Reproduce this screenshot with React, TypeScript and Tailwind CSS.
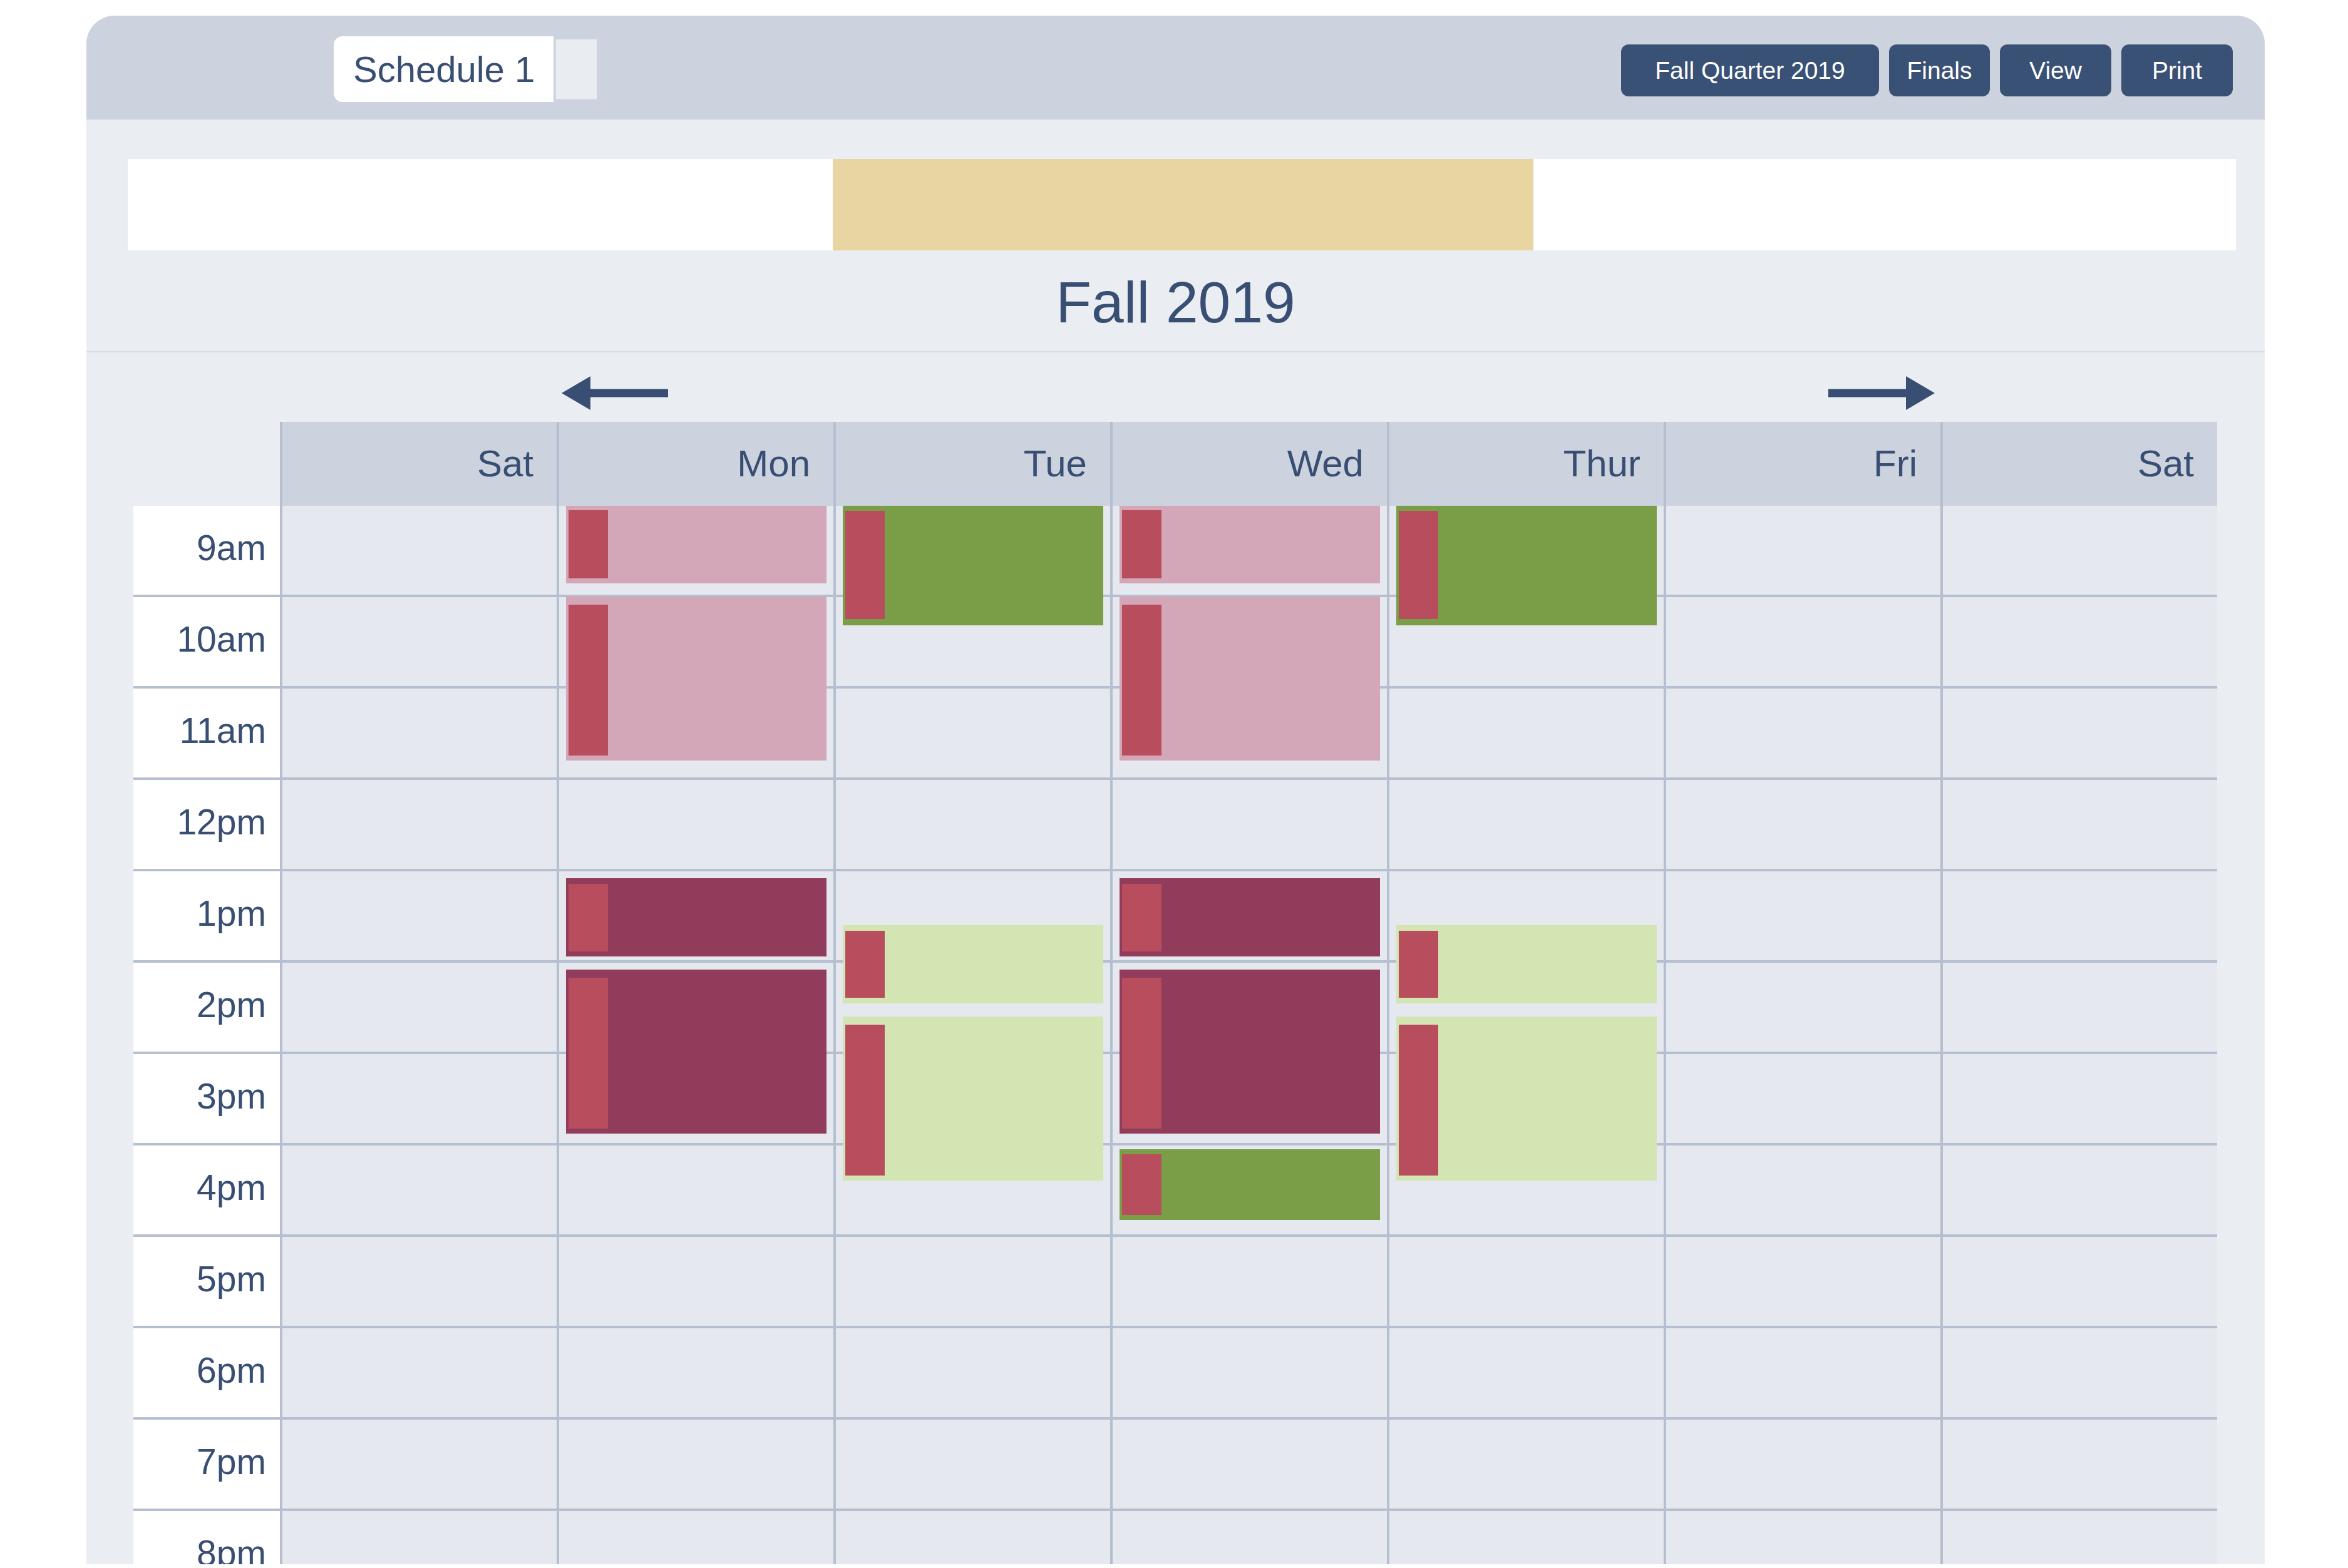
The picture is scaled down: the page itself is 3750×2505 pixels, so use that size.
import React from 'react';

const hours = ['9am', '10am', '11am', '12pm', '1pm', '2pm', '3pm', '4pm', '5pm', '6pm', '7pm', '8pm'];
const days = ['Sat', 'Mon', 'Tue', 'Wed', 'Thur', 'Fri', 'Sat'];

type Kind = 'lecture' | 'lab' | 'seminar' | 'section';

const kindClass: Record<Kind, string> = {
    lecture: 'bg-[#d4a7b8]',
    lab: 'bg-[#913c5a]',
    seminar: 'bg-[#7a9e47]',
    section: 'bg-[#d3e5b3]',
};

// top / height in px from the 9am line
type Block = { top: number; h: number; barTop: number; barBottom: number; kind: Kind };

const blocks: Record<number, Block[]> = {
    1: [
        { top: 0, h: 124, barTop: 7, barBottom: 8, kind: 'lecture' },
        { top: 145, h: 262, barTop: 13, barBottom: 8, kind: 'lecture' },
        { top: 595, h: 125, barTop: 9, barBottom: 8, kind: 'lab' },
        { top: 741, h: 262, barTop: 13, barBottom: 8, kind: 'lab' },
    ],
    2: [
        { top: 0, h: 191, barTop: 8, barBottom: 10, kind: 'seminar' },
        { top: 670, h: 125, barTop: 9, barBottom: 9, kind: 'section' },
        { top: 816, h: 262, barTop: 13, barBottom: 8, kind: 'section' },
    ],
    3: [
        { top: 0, h: 124, barTop: 7, barBottom: 8, kind: 'lecture' },
        { top: 145, h: 262, barTop: 13, barBottom: 8, kind: 'lecture' },
        { top: 595, h: 125, barTop: 9, barBottom: 8, kind: 'lab' },
        { top: 741, h: 262, barTop: 13, barBottom: 8, kind: 'lab' },
        { top: 1028, h: 113, barTop: 8, barBottom: 8, kind: 'seminar' },
    ],
    4: [
        { top: 0, h: 191, barTop: 8, barBottom: 10, kind: 'seminar' },
        { top: 670, h: 125, barTop: 9, barBottom: 9, kind: 'section' },
        { top: 816, h: 262, barTop: 13, barBottom: 8, kind: 'section' },
    ],
};

const buttons = [
    { label: 'Fall Quarter 2019', w: 'w-[412px]' },
    { label: 'Finals', w: 'w-[161px]' },
    { label: 'View', w: 'w-[178px]' },
    { label: 'Print', w: 'w-[178px]' },
];

function Arrow({ dir }: { dir: 'left' | 'right' }) {
    return (
        <svg width="170" height="54" viewBox="0 0 170 54" className={dir === 'right' ? '-scale-x-100' : ''}>
            <polygon points="0,27 46,0 46,54" fill="#384e73" />
            <rect x="44" y="20.5" width="126" height="13" fill="#384e73" />
        </svg>
    );
}

export default function App() {
    return (
        <div className="w-[3750px] h-[2505px] overflow-hidden bg-white pt-[25px] pl-[138px] font-[family-name:Liberation_Sans,Arial,sans-serif] text-[#384e73]">
            <div className="w-[3479px] h-[2474px] overflow-hidden rounded-t-[45px] bg-[#eaedf2]">
                {/* top bar */}
                <div className="h-[166px] bg-[#cdd3de] flex items-start">
                    <div className="ml-[395px] mt-[33px] flex items-center">
                        <div className="w-[351px] h-[105px] rounded-l-[14px] bg-white flex items-center pl-[31px] text-[58px] leading-none">
                            Schedule 1
                        </div>
                        <div className="ml-[3px] w-[67px] h-[97px] bg-[#e9ecf1] border border-[#d6dbe4]" />
                    </div>
                    <div className="ml-auto mr-[51px] mt-[46px] flex gap-[16px]">
                        {buttons.map((b) => (
                            <div
                                key={b.label}
                                className={`${b.w} h-[83px] rounded-[12px] bg-[#3a5176] text-white text-[39px] leading-none flex items-center justify-center`}
                            >
                                {b.label}
                            </div>
                        ))}
                    </div>
                </div>

                {/* quarter strip */}
                <div className="mt-[63px] ml-[66px] mr-[46px] h-[146px] bg-white flex">
                    <div className="ml-[1126px] w-[1119px] bg-[#e8d5a1]" />
                </div>

                <div className="mt-[37px] text-center text-[93px] leading-none">Fall 2019</div>
                <div className="mt-[31px] h-[2px] bg-[#d5dae3]" />

                {/* week nav */}
                <div className="ml-[75px] h-[111px] grid grid-cols-[234px_repeat(7,442px)] items-start pt-[38px]">
                    <div className="col-start-3 ml-[8px] justify-self-start">
                        <Arrow dir="left" />
                    </div>
                    <div className="col-start-7 mr-[9px] justify-self-end">
                        <Arrow dir="right" />
                    </div>
                </div>

                {/* calendar */}
                <div className="ml-[75px] flex">
                    <div className="w-[234px] flex flex-col">
                        <div className="h-[134px]" />
                        {hours.map((h) => (
                            <div
                                key={h}
                                className="h-[146px] bg-white border-b-4 border-[#b5bfd0] flex items-center justify-end pr-[22px] pb-[8px] text-[57px] leading-none"
                            >
                                {h}
                            </div>
                        ))}
                    </div>
                    {days.map((d, i) => (
                        <div key={i} className="w-[442px] flex flex-col border-l-4 border-[#b5bfd0]">
                            <div className="h-[134px] bg-[#cdd3de] flex items-center justify-end pr-[37px] text-[60px] leading-none">
                                {d}
                            </div>
                            <div className="relative">
                                {hours.map((h) => (
                                    <div key={h} className="h-[146px] bg-[#e5e8ee] border-b-4 border-[#b5bfd0]" />
                                ))}
                                {(blocks[i] || []).map((b, j) => (
                                    <div
                                        key={j}
                                        className={`absolute left-[11px] w-[416px] ${kindClass[b.kind]}`}
                                        style={{ top: b.top, height: b.h }}
                                    >
                                        <div
                                            className="absolute left-[4px] w-[63px] bg-[#b84d5e]"
                                            style={{ top: b.barTop, bottom: b.barBottom }}
                                        />
                                    </div>
                                ))}
                            </div>
                        </div>
                    ))}
                </div>
            </div>
        </div>
    );
}
